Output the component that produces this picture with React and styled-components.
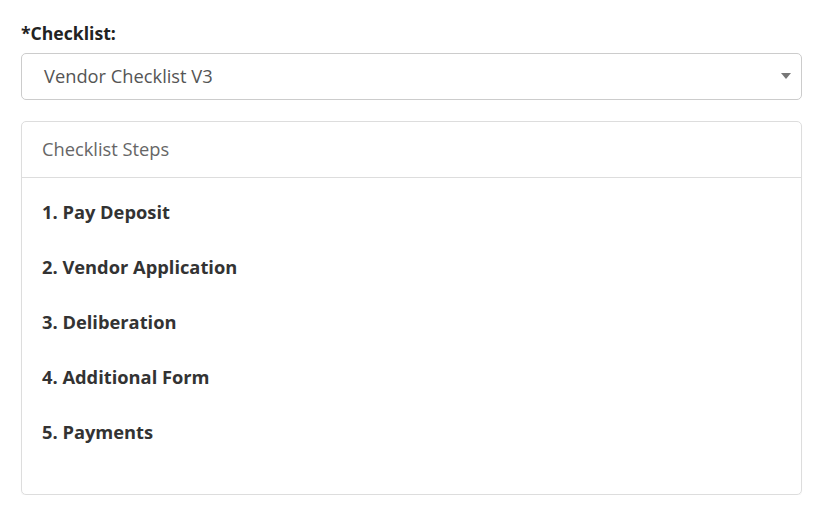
import React from "react"
import styled, { createGlobalStyle } from "styled-components"

const GlobalStyle = createGlobalStyle`
	* { box-sizing: border-box; }
	body {
		margin: 0;
		background: #ffffff;
		font-family: "Open Sans", "Noto Sans", sans-serif;
		color: #333333;
	}
`

const Page = styled.div`
	padding: 21px 17px 0 21px;
	width: 819px;
`

const Label = styled.label`
	display: block;
	font-size: 17.6px;
	font-weight: 700;
	line-height: 24px;
	color: #222222;
	margin-bottom: 8px;
`

const Select = styled.div`
	position: relative;
	height: 47px;
	border: 1px solid #cccccc;
	border-radius: 5px;
	display: flex;
	align-items: center;
	padding: 0 22px 2px;
	font-size: 18.3px;
	color: #555555;
	margin-bottom: 21px;
`

const Caret = styled.span`
	position: absolute;
	right: 10px;
	top: 50%;
	margin-top: -4px;
	width: 0;
	height: 0;
	border-left: 5px solid transparent;
	border-right: 5px solid transparent;
	border-top: 6px solid #777777;
`

const Panel = styled.div`
	border: 1px solid #dddddd;
	border-radius: 5px;
	height: 374px;
	box-shadow: 0 1px 1px rgba(0, 0, 0, 0.05);
`

const PanelHeader = styled.div`
	height: 56px;
	border-bottom: 1px solid #dddddd;
	display: flex;
	align-items: center;
	padding: 0 20px 3px;
	font-size: 18.3px;
	color: #666666;
`

const StepList = styled.ol`
	list-style: none;
	margin: 0;
	padding: 22px 20px 0;
	display: flex;
	flex-direction: column;
	gap: 31px;
`

const Step = styled.li`
	font-size: 18.3px;
	font-weight: 700;
	line-height: 24px;
	color: #333333;
`

const steps = ["Pay Deposit", "Vendor Application", "Deliberation", "Additional Form", "Payments"]

const App = () => {
	return (
		<>
			<GlobalStyle />
			<Page>
				<Label>*Checklist:</Label>
				<Select>
					Vendor Checklist V3
					<Caret />
				</Select>
				<Panel>
					<PanelHeader>Checklist Steps</PanelHeader>
					<StepList>
						{steps.map((step, i) => (
							<Step key={step}>
								{i + 1}. {step}
							</Step>
						))}
					</StepList>
				</Panel>
			</Page>
		</>
	)
}

export default App
